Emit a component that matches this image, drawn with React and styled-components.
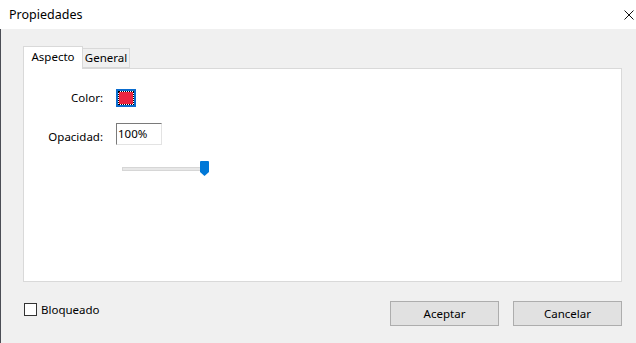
import React from "react";
import styled, { createGlobalStyle } from "styled-components";

const GlobalStyle = createGlobalStyle`
  body {
    margin: 0;
    font-family: "Noto Sans", "Liberation Sans", sans-serif;
    font-size: 11.5px;
    color: #000;
  }
`

const Window = styled.div`
  width: 636px;
  height: 343px;
  background-color: #f0f0f0;
  display: flex;
  flex-direction: column;
  overflow: hidden;
`

const TitleBar = styled.div`
  height: 29px;
  flex-shrink: 0;
  background-color: #ffffff;
  display: flex;
  align-items: center;
  justify-content: space-between;
  padding-left: 9px;
  padding-right: 2px;
`

const Title = styled.span`
  font-size: 12.5px;
  line-height: 16px;
`

const Close = styled.span`
  width: 10px;
  height: 10px;
  display: flex;
`

const Body = styled.div`
  flex: 1;
  border-left: 1px solid #4b4d55;
  padding: 17px 14px 0 22px;
  display: flex;
  flex-direction: column;
`

const Tabs = styled.div`
  display: flex;
  align-items: flex-end;
  height: 22px;
  position: relative;
  z-index: 1;
`

const Tab = styled.div`
  box-sizing: border-box;
  height: ${p => (p.active ? "23px" : "20px")};
  width: ${p => p.width}px;
  margin-bottom: ${p => (p.active ? "-1px" : "0")};
  background-color: ${p => (p.active ? "#ffffff" : "#f0f0f0")};
  border: 1px solid #d9d9d9;
  border-bottom: ${p => (p.active ? "none" : "1px solid #d9d9d9")};
  border-left: ${p => (p.active ? "1px solid #d9d9d9" : "none")};
  display: flex;
  justify-content: center;
  padding-top: ${p => (p.active ? "2px" : "1px")};
  line-height: 16px;
`

const Panel = styled.div`
  box-sizing: border-box;
  width: 599px;
  height: 214px;
  background-color: #ffffff;
  border: 1px solid #d9d9d9;
  padding-top: 20px;
  display: grid;
  grid-template-columns: 79px auto;
  column-gap: 13px;
  row-gap: 16px;
  align-content: start;
  align-items: center;
`

const Label = styled.span`
  text-align: right;
  line-height: 16px;
  padding-top: ${p => p.drop || 0}px;
`

const Swatch = styled.div`
  box-sizing: border-box;
  width: 20px;
  height: 18px;
  background-color: #0a6ccf;
  padding: 2px;
  display: flex;
`

const SwatchInner = styled.div`
  flex: 1;
  border: 1px dotted #000;
  background-color: #ffffff;
  display: flex;
`

const SwatchColor = styled.div`
  flex: 1;
  background-color: #ec2440;
`

const Input = styled.div`
  box-sizing: border-box;
  width: 46px;
  height: 22px;
  background: #ffffff;
  border-top: 1px solid #7a7a7a;
  border-left: 1px solid #7a7a7a;
  border-right: 1px solid #e3e3e3;
  border-bottom: 1px solid #e3e3e3;
  padding-left: 1px;
  display: flex;
  align-items: center;
  line-height: 16px;
`

const Slider = styled.div`
  grid-column: 2;
  width: 93px;
  height: 15px;
  display: flex;
  align-items: center;
  position: relative;
  margin-left: 6px;
`

const Track = styled.div`
  box-sizing: border-box;
  width: 84px;
  height: 4px;
  background-color: #e7e7e7;
  border: 1px solid #d6d6d6;
`

const Thumb = styled.svg`
  position: absolute;
  left: 78px;
  top: 0;
`

const Footer = styled.div`
  display: flex;
  align-items: center;
  margin-top: 19px;
  padding-left: 1px;
`

const Check = styled.label`
  display: flex;
  align-items: center;
  gap: 4px;
  margin-bottom: 8px;
  line-height: 16px;
`

const Box = styled.span`
  box-sizing: border-box;
  width: 13px;
  height: 13px;
  background: #ffffff;
  border: 1px solid #333333;
`

const Buttons = styled.div`
  margin-left: auto;
  display: flex;
  gap: 14px;
`

const Button = styled.button`
  box-sizing: border-box;
  width: 109px;
  height: 25px;
  background-color: #e1e1e1;
  border: 1px solid #adadad;
  font-family: inherit;
  font-size: 11.5px;
  color: #000;
  padding: 0;
`

function App() {
    return (
        <Window>
            <GlobalStyle />
            <TitleBar>
                <Title>Propiedades</Title>
                <Close>
                    <svg width="10" height="10" viewBox="0 0 10 10">
                        <path d="M0.5 0.5 L9.5 9.5 M9.5 0.5 L0.5 9.5" stroke="#111" strokeWidth="1" />
                    </svg>
                </Close>
            </TitleBar>
            <Body>
                <Tabs>
                    <Tab active width={60}>Aspecto</Tab>
                    <Tab width={47}>General</Tab>
                </Tabs>
                <Panel>
                    <Label>Color:</Label>
                    <Swatch>
                        <SwatchInner>
                            <SwatchColor />
                        </SwatchInner>
                    </Swatch>
                    <Label drop={6}>Opacidad:</Label>
                    <Input>100%</Input>
                    <Slider>
                        <Track />
                        <Thumb width="9" height="15" viewBox="0 0 9 15">
                            <path d="M1 0 H8 Q9 0 9 1 V11 L4.5 15 L0 11 V1 Q0 0 1 0 Z" fill="#0078d7" />
                        </Thumb>
                    </Slider>
                </Panel>
                <Footer>
                    <Check>
                        <Box />
                        Bloqueado
                    </Check>
                    <Buttons>
                        <Button>Aceptar</Button>
                        <Button>Cancelar</Button>
                    </Buttons>
                </Footer>
            </Body>
        </Window>
    );
}

export default App;
